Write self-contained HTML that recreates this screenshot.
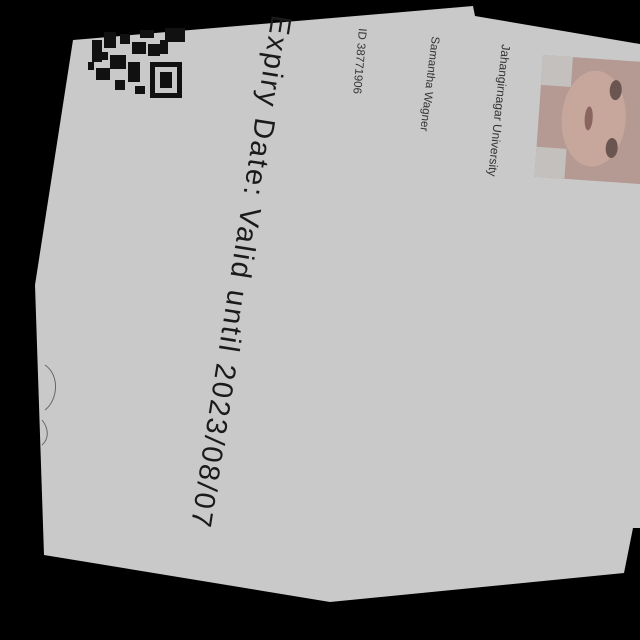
<!DOCTYPE html>
<html><head><style>html,body{margin:0;padding:0;background:#000;width:640px;height:640px;overflow:hidden}</style></head>
<body>
<svg width="640" height="640" viewBox="0 0 640 640" xmlns="http://www.w3.org/2000/svg">
<rect width="640" height="640" fill="#000"/>
<polygon points="73,40 473,6 475,16 640,44 640,528 633,528 624,573 330,602 44,555 35,285" fill="#c9c9c9"/>
<g transform="translate(543,55) rotate(4)">
<rect x="0" y="0" width="110" height="122" fill="#b49a92"/>
<rect x="0" y="0" width="30" height="30" fill="#c4c0bd"/>
<rect x="0" y="92" width="30" height="30" fill="#c4c0bd"/>
<ellipse cx="55" cy="60" rx="32" ry="48" fill="#c7a79c"/>
<ellipse cx="75" cy="30" rx="6" ry="10" fill="#6a5550"/>
<ellipse cx="75" cy="88" rx="6" ry="10" fill="#6a5550"/>
<ellipse cx="50" cy="60" rx="4" ry="12" fill="#8a6560"/>
</g>
<g fill="#111">
<rect x="150" y="62" width="32" height="36"/><rect x="155" y="67" width="22" height="26" fill="#c9c9c9"/><rect x="160" y="72" width="12" height="16"/>
<rect x="165" y="28" width="20" height="14"/>
<rect x="92" y="40" width="10" height="22"/><rect x="104" y="32" width="12" height="16"/><rect x="110" y="55" width="16" height="14"/>
<rect x="120" y="34" width="10" height="10"/><rect x="132" y="42" width="14" height="12"/><rect x="96" y="68" width="14" height="12"/>
<rect x="128" y="62" width="12" height="20"/><rect x="140" y="30" width="14" height="8"/><rect x="148" y="44" width="12" height="12"/>
<rect x="115" y="80" width="10" height="10"/><rect x="100" y="52" width="8" height="8"/><rect x="135" y="86" width="10" height="8"/>
<rect x="88" y="62" width="6" height="8"/><rect x="160" y="40" width="8" height="14"/>
</g>
<g font-family="Liberation Sans, sans-serif" fill="#1a1a1a">
<text transform="translate(272,14) rotate(99)" font-size="29" letter-spacing="2.2">Expiry Date: Valid until 2023/08/07</text>
<text transform="translate(502,44) rotate(96)" font-size="12" fill="#333">Jahangirnagar University</text>
<text transform="translate(432,36) rotate(97)" font-size="11.5" fill="#333">Samantha Wagner</text>
<text transform="translate(359,28) rotate(95)" font-size="11.5" fill="#333">ID 38771906</text>
</g>
<path d="M45,365 C60,375 58,400 45,410 M42,420 C50,430 48,440 42,445" stroke="#666" fill="none" stroke-width="1"/>
</svg>
</body></html>
